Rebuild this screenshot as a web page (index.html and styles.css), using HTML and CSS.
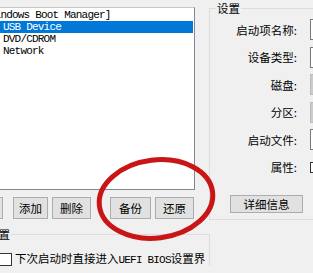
FILE: index.html
```html
<!DOCTYPE html>
<html lang="zh-CN">
<head>
<meta charset="utf-8">
<link rel="stylesheet" href="styles.css">
</head>
<body>
<div class="screen">
  <div class="top">
    <div class="left">
      <div class="listbox">
        <div class="item item-cut">[Windows Boot Manager]</div>
        <div class="item selected">USB Device</div>
        <div class="item">DVD/CDROM</div>
        <div class="item">Network</div>
      </div>
      <div class="btnrow">
        <button class="btn b0">编辑</button>
        <button class="btn b1">添加</button>
        <button class="btn b2">删除</button>
        <button class="btn b3">备份</button>
        <button class="btn b4">还原</button>
      </div>
    </div>
    <fieldset class="settings">
      <legend>设置</legend>
      <div class="form">
        <label class="lbl">启动项名称:</label><span class="field"></span>
        <label class="lbl">设备类型:</label><span class="field"></span>
        <label class="lbl">磁盘:</label><span class="field disabled"></span>
        <label class="lbl">分区:</label><span class="field disabled"></span>
        <label class="lbl">启动文件:</label><span class="field"></span>
        <label class="lbl">属性:</label><span class="minibox"><span class="minibar"></span></span>
      </div>
      <button class="btn detail">详细信息</button>
    </fieldset>
  </div>
  <fieldset class="bottom">
    <legend>设置</legend>
    <div class="checkrow">
      <span class="checkbox"></span>
      <span class="checktext">下次启动时直接进入<span class="mono">UEFI BIOS</span>设置界面</span>
    </div>
  </fieldset>
  <svg class="mark" width="313" height="273" viewBox="0 0 313 273">
    <ellipse cx="156" cy="199" rx="57" ry="39" transform="rotate(-7 156 199)" fill="none" stroke="#c91515" stroke-width="5"/>
  </svg>
</div>
</body>
</html>
```

FILE: styles.css
```css
* { box-sizing: border-box; }
html, body { margin: 0; padding: 0; background: #f0f0f0; }
body {
  font-family: "Noto Sans CJK SC", "Liberation Sans", sans-serif;
  font-size: 11.5px;
  color: #000;
}
.screen {
  position: relative;
  width: 313px;
  height: 273px;
  overflow: hidden;
  background: #f0f0f0;
}
.top {
  display: flex;
  align-items: flex-start;
}
.left {
  width: 195px;
  flex: none;
}
.listbox {
  margin-top: 7px;
  height: 183px;
  background: #fff;
  border-top: 1px solid #c8c8c8;
  border-right: 1px solid #828790;
  border-bottom: 1px solid #828790;
  padding-top: 1px;
  overflow: hidden;
}
.item {
  font-family: "Liberation Mono", monospace;
  font-size: 11px;
  letter-spacing: -0.8px;
  line-height: 12px;
  height: 12px;
  padding-left: 3px;
  margin-right: 1px;
  white-space: nowrap;
}
.item-cut { text-indent: -20px; }
.selected {
  background: #0078d7;
  color: #fff;
}
.btnrow {
  display: flex;
  margin-top: 7px;
  height: 22px;
}
.btn {
  font-family: "Noto Sans CJK SC", sans-serif;
  font-size: 11.5px;
  line-height: 14px;
  padding: 0;
  height: 22px;
  background: #e1e1e1;
  border: 1px solid #adadad;
  color: #000;
  flex: none;
}
.b0 { margin-left: -36px; width: 39px; }
.b1 { margin-left: 10px; width: 35px; }
.b2 { margin-left: 4px; width: 39px; }
.b3 { margin-left: 19px; width: 41px; }
.b4 { margin-left: 4px; width: 39px; }

.settings {
  margin: 1px 0 0 14px;
  padding: 0;
  width: 130px;
  flex: none;
  border: 1px solid #dcdcdc;
  min-width: 0;
}
.settings legend {
  margin-left: 6px;
  padding: 0 1px;
  line-height: 14px;
  font-size: 11.5px;
}
.form {
  display: grid;
  grid-template-columns: 87px 60px;
  grid-auto-rows: 27.5px;
  column-gap: 13px;
  align-items: center;
  padding-top: 1px;
}
.lbl {
  text-align: right;
  line-height: 14px;
  white-space: nowrap;
}
.field {
  height: 21px;
  background: #fff;
  border: 1px solid #7a7a7a;
}
.field.disabled {
  background: #cccccc;
  border-color: #bcbcbc;
}
.minibox {
  width: 11px;
  height: 11px;
  border: 1px solid #333;
  background: #fff;
  position: relative;
  display: flex;
  align-items: center;
}
.minibar {
  display: block;
  margin-left: 2px;
  width: 5px;
  height: 1px;
  background: #333;
}
.detail {
  display: block;
  margin: 14px 0 6px 20px;
  width: 73px;
  height: 18px;
  line-height: 14px;
}

.bottom {
  margin: 7px 0 0 -20px;
  padding: 0;
  width: 230px;
  border: 1px solid #dcdcdc;
  border-bottom: none;
  min-width: 0;
}
.bottom legend {
  margin-left: 5px;
  padding: 0 1px;
  line-height: 14px;
  font-size: 11.5px;
}
.checkrow {
  display: flex;
  align-items: center;
  margin-top: 11px;
  margin-left: 18px;
  height: 14px;
}
.checkbox {
  flex: none;
  width: 13px;
  height: 13px;
  border: 1px solid #333;
  background: #fff;
}
.checktext {
  margin-left: 3px;
  width: 190px;
  overflow: hidden;
  white-space: nowrap;
  line-height: 14px;
}
.mono {
  font-family: "Liberation Mono", monospace;
  font-size: 11px;
  letter-spacing: -0.8px;
}
.mark {
  position: absolute;
  left: 0;
  top: 0;
  pointer-events: none;
}
```
